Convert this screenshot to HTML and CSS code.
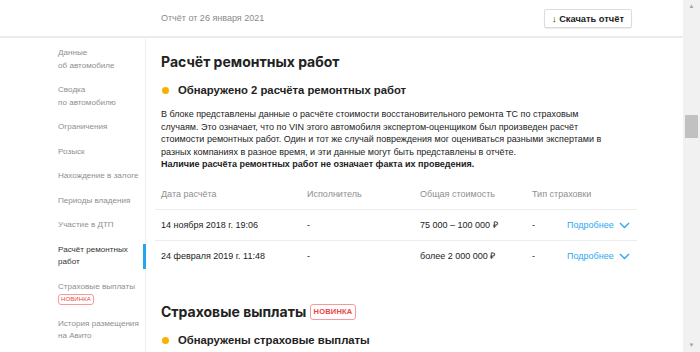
FILE: index.html
```html
<!DOCTYPE html>
<html lang="ru">
<head>
    <meta charset="UTF-8">
    <meta name="viewport" content="width=device-width, initial-scale=1.0">
    <title>Отчёт об автомобиле</title>
    <link rel="stylesheet" href="styles.css">
</head>
<body>
    <div class="window">
        <div class="viewport">
            <!-- Header -->
            <header class="header">
                <div class="report-date">Отчёт от 26 января 2021</div>
                <button class="download-btn"><span class="arrow">↓</span> Скачать отчёт</button>
            </header>

            <div class="layout">
                <!-- Sidebar navigation -->
                <nav class="sidebar">
                    <a class="nav-item">Данные<br>об автомобиле</a>
                    <a class="nav-item">Сводка<br>по автомобилю</a>
                    <a class="nav-item">Ограничения</a>
                    <a class="nav-item">Розыск</a>
                    <a class="nav-item">Нахождение в залоге</a>
                    <a class="nav-item">Периоды владения</a>
                    <a class="nav-item">Участие в ДТП</a>
                    <a class="nav-item active">Расчёт ремонтных<br>работ</a>
                    <a class="nav-item">Страховые выплаты<br><span class="badge small">НОВИНКА</span></a>
                    <a class="nav-item">История размещения<br>на Авито</a>
                </nav>

                <!-- Main content -->
                <main class="content">
                    <section class="block">
                        <h2 class="block-title">Расчёт ремонтных работ</h2>
                        <div class="status"><span class="dot"></span>Обнаружено 2 расчёта ремонтных работ</div>
                        <p class="description">В блоке представлены данные о расчёте стоимости восстановительного ремонта ТС по страховым<br>случаям. Это означает, что по VIN этого автомобиля экспертом-оценщиком был произведен расчёт<br>стоимости ремонтных работ. Один и тот же случай повреждения мог оцениваться разными экспертами в<br>разных компаниях в разное время, и эти данные могут быть представлены в отчёте.<br><b>Наличие расчёта ремонтных работ не означает факта их проведения.</b></p>

                        <table class="repairs">
                            <thead>
                                <tr>
                                    <th class="col-date">Дата расчёта</th>
                                    <th class="col-exec">Исполнитель</th>
                                    <th class="col-cost">Общая стоимость</th>
                                    <th class="col-type">Тип страховки</th>
                                    <th></th>
                                </tr>
                            </thead>
                            <tbody>
                                <tr>
                                    <td>14 ноября 2018 г. 19:06</td>
                                    <td>-</td>
                                    <td class="cost">75 000 – 100 000 ₽</td>
                                    <td>-</td>
                                    <td class="more">Подробнее<svg width="11" height="7" viewBox="0 0 11 7"><path d="M1 1l4.5 4.5L10 1" fill="none" stroke="#2ea8f0" stroke-width="1.4"/></svg></td>
                                </tr>
                                <tr>
                                    <td>24 февраля 2019 г. 11:48</td>
                                    <td>-</td>
                                    <td class="cost">более 2 000 000 ₽</td>
                                    <td>-</td>
                                    <td class="more">Подробнее<svg width="11" height="7" viewBox="0 0 11 7"><path d="M1 1l4.5 4.5L10 1" fill="none" stroke="#2ea8f0" stroke-width="1.4"/></svg></td>
                                </tr>
                            </tbody>
                        </table>
                    </section>

                    <section class="block">
                        <h2 class="block-title">Страховые выплаты <span class="badge">НОВИНКА</span></h2>
                        <div class="status"><span class="dot"></span>Обнаружены страховые выплаты</div>
                    </section>
                </main>
            </div>
        </div>

        <!-- Scrollbar -->
        <div class="scrollbar">
            <span class="scroll-arrow">▲</span>
            <div class="scroll-track"><div class="scroll-thumb"></div></div>
            <span class="scroll-arrow">▼</span>
        </div>
    </div>
</body>
</html>
```

FILE: styles.css
```css
html, body {
    margin: 0;
    padding: 0;
    height: 100%;
    overflow: hidden;
}
body {
    font-family: "Liberation Sans", Arial, sans-serif;
    font-size: 9px;
    color: #222;
    background: #fff;
}
.window {
    display: flex;
    height: 352px;
}
.viewport {
    flex: 1;
    overflow: hidden;
}
.header {
    height: 36px;
    border-bottom: 2px solid #ebebeb;
    display: flex;
    align-items: center;
    justify-content: space-between;
    padding: 0 51px 0 161px;
}
.report-date {
    color: #8a8a8a;
    font-size: 9px;
}
.download-btn {
    font-family: "Liberation Sans", Arial, sans-serif;
    font-size: 9.3px;
    font-weight: bold;
    color: #222;
    background: #fff;
    border: 1px solid #dcdcdc;
    border-radius: 2px;
    box-shadow: 0 1px 1px rgba(0, 0, 0, 0.08);
    height: 19px;
    padding: 0 7px;
    margin-top: 1px;
}
.download-btn .arrow {
    font-weight: normal;
}
.layout {
    display: flex;
}
.sidebar {
    width: 145px;
    flex-shrink: 0;
    border-right: 1px solid #f0f0f0;
    padding-top: 9px;
    min-height: 330px;
}
.nav-item {
    display: block;
    padding-left: 58px;
    margin: 0 -1px 12px 0;
    color: #8f8f8f;
    line-height: 12.5px;
    font-size: 8.1px;
    white-space: nowrap;
}
.nav-item.active {
    color: #333;
    border-right: 3px solid #22a6f0;
}
.badge {
    display: inline-block;
    border: 1px solid #f59a9a;
    border-radius: 3px;
    color: #ee4444;
    font-family: "Liberation Sans", Arial, sans-serif;
    font-size: 7.5px;
    font-weight: bold;
    line-height: 14px;
    padding: 0 3px;
    vertical-align: middle;
    letter-spacing: 0.2px;
}
.badge.small {
    font-size: 6px;
    font-weight: normal;
    line-height: 9px;
    padding: 0 2px;
    margin-top: 1px;
    letter-spacing: 0.1px;
}
.content {
    flex: 1;
    padding: 0 46px 0 15px;
}
.block {
    margin-bottom: 31px;
}
.block-title {
    font-family: Inter, "Liberation Sans", sans-serif;
    font-size: 14px;
    font-weight: bold;
    margin: 14px 0 12px;
    line-height: 20px;
}
.block-title .badge {
    position: relative;
    top: -1px;
}
.status {
    font-size: 11.3px;
    font-weight: bold;
    display: flex;
    align-items: center;
    margin-bottom: 12px;
}
.dot {
    width: 7px;
    height: 7px;
    border-radius: 50%;
    background: #fbb000;
    margin: 0 9px 0 1px;
}
.description {
    margin: 0 0 14px;
    line-height: 12.5px;
    white-space: nowrap;
    color: #222;
}
.repairs {
    width: calc(100% + 6px);
    margin-left: -6px;
    border-collapse: collapse;
    table-layout: fixed;
}
.repairs th, .repairs td {
    box-sizing: border-box;
    white-space: nowrap;
    padding-left: 6px;
}
.repairs th {
    text-align: left;
    font-weight: normal;
    color: #8f8f8f;
    padding-top: 4px;
    padding-bottom: 10px;
}
.repairs td {
    height: 31px;
    padding-top: 0;
    padding-bottom: 0;
    border-top: 1px solid #ececec;
    color: #222;
}
.col-date { width: 146px; }
.col-exec { width: 113px; }
.col-cost { width: 112px; }
.col-type { width: 35px; }
.repairs .more {
    color: #2ea8f0;
}
.more svg {
    margin-left: 5px;
    vertical-align: middle;
}
.scrollbar {
    width: 17px;
    background: #f1f1f1;
    display: flex;
    flex-direction: column;
    align-items: center;
}
.scroll-arrow {
    font-size: 6px;
    color: #a3a3a3;
    height: 13px;
    line-height: 13px;
}
.scroll-track {
    flex: 1;
    width: 100%;
}
.scroll-thumb {
    margin: 102px 2px 0;
    height: 23px;
    background: #c1c1c1;
}
```
